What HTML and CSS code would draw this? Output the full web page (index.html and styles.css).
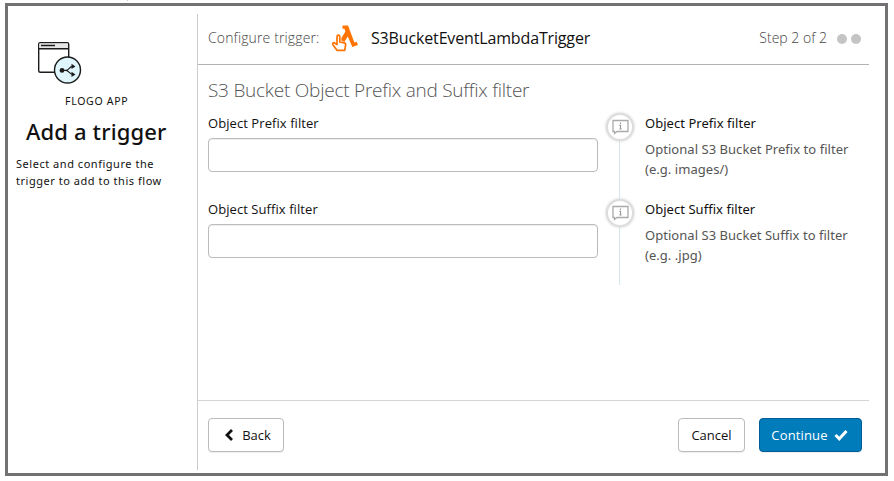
FILE: index.html
```html
<!DOCTYPE html>
<html lang="en">
<head>
<meta charset="utf-8">
<title>Add a trigger</title>
<link rel="stylesheet" href="styles.css">
</head>
<body>
<div class="tick"></div>
<div class="dialog">
  <aside class="sidebar">
    <svg class="app-icon" width="46" height="44" viewBox="0 0 46 44" fill="none" stroke="#1c1c1c" stroke-width="1.4">
      <rect x="1.7" y="1.7" width="30" height="29.5" rx="1.5" fill="#fff"/>
      <path d="M2.4 2.4h28.6v4.8H2.4z" fill="#e6e6e6" stroke="none"/>
      <path d="M2 7.7h30M4 4.5h14"/>
      <circle cx="30.5" cy="29" r="13" fill="#e0f6fd"/>
      <circle cx="25" cy="29.4" r="2.4" fill="#1c1c1c" stroke="none"/>
      <path d="M25 29.4h4c3 0 3-4 7-4M29 29.4c3 0 3 4 7 4" stroke-width="1.1"/>
      <path d="M34.5 22.7l4 2.7-4 2.7zM34.5 30.7l4 2.7-4 2.7z" fill="#1c1c1c" stroke="none"/>
    </svg>
    <div class="app-name">FLOGO APP</div>
    <h1 class="title">Add a trigger</h1>
    <p class="intro">Select and configure the<br>trigger to add to this flow</p>
  </aside>
  <main class="main">
    <header class="header">
      <span class="configure">Configure trigger:</span>
      <svg class="trigger-icon" width="28" height="28" viewBox="0 0 28 28">
        <path d="M11.5 1.5H17L23.4 18.5l2.3-.8 1.2 3.4-5.6 2L16.8 12.4 13.3 18 10.4 16.4V14l4-6.5-1-2.8h-1.9z" fill="#ff7300"/>
        <path d="M6 20.5v-7.8c0-2 2.8-2 2.8 0V18l4.4.9c1.3.3 1.6 1 1.4 2.2l-.9 5.3H6.2L2 20.9c-1.1-1.7.7-2.8 1.9-1.7z" fill="#fff" stroke="#ff7300" stroke-width="1.7" stroke-linejoin="round"/>
      </svg>
      <span class="trigger-name">S3BucketEventLambdaTrigger</span>
      <span class="step">Step 2 of 2</span>
      <i class="dot"></i><i class="dot"></i>
    </header>
    <section class="content">
      <h2 class="heading">S3 Bucket Object Prefix and Suffix filter</h2>
      <div class="columns">
        <div class="fields">
          <div class="field"><label class="label" for="prefix">Object Prefix filter</label><input class="input" id="prefix"></div>
          <div class="field"><label class="label" for="suffix">Object Suffix filter</label><input class="input" id="suffix"></div>
        </div>
        <div class="hints">
          <div class="hint">
            <div class="badge"><svg width="17" height="16" viewBox="0 0 17 16"><path d="M1 1.5h15v11H5L2.5 14.5v-2H1z" fill="none" stroke="#aaa" stroke-width="1.3"/><path d="M8.5 3.5v1.4M7.4 6.4h1.1V10M7.4 10h2.2" fill="none" stroke="#999" stroke-width="1.1"/></svg></div>
            <div><div class="hint-title">Object Prefix filter</div><div class="hint-text">Optional S3 Bucket Prefix to filter<br>(e.g. images/)</div></div>
          </div>
          <div class="hint">
            <div class="badge"><svg width="17" height="16" viewBox="0 0 17 16"><path d="M1 1.5h15v11H5L2.5 14.5v-2H1z" fill="none" stroke="#aaa" stroke-width="1.3"/><path d="M8.5 3.5v1.4M7.4 6.4h1.1V10M7.4 10h2.2" fill="none" stroke="#999" stroke-width="1.1"/></svg></div>
            <div><div class="hint-title">Object Suffix filter</div><div class="hint-text">Optional S3 Bucket Suffix to filter<br>(e.g. .jpg)</div></div>
          </div>
        </div>
      </div>
    </section>
    <footer class="footer">
      <button class="button back"><svg width="10" height="12" viewBox="0 0 10 12"><path d="M8 1L3 6l5 5" fill="none" stroke="#111" stroke-width="2.8"/></svg><span>Back</span></button>
      <button class="button cancel"><span>Cancel</span></button>
      <button class="button continue"><span>Continue</span><svg width="14" height="12" viewBox="0 0 14 12"><path d="M1.5 6l3.8 3.8L12.5 2" fill="none" stroke="#fff" stroke-width="3"/></svg></button>
    </footer>
  </main>
</div>
</body>
</html>
```
FILE: styles.css
```css
* { box-sizing: border-box; }
body { margin: 0; height: 481px; overflow: hidden; background: #fff; color: #111; font-family: "Open Sans", "Noto Sans", sans-serif; font-size: 13px; }
h1, h2, p { margin: 0; font-weight: 400; }
svg { display: block; flex: none; }
span, .heading, .title, .app-name, .intro, .label, .hint { white-space: nowrap; }
.tick { width: 1px; height: 1px; margin-left: 127px; background: #ccc; }
.dialog { display: flex; width: 883px; height: 473px; margin: 2px 0 0 5px; border: 3px solid #737173; }
.sidebar { width: 189px; padding: 35px 0 0 8px; font-family: "Noto Sans", sans-serif; }
.app-icon { margin-left: 21px; }
.app-name { margin: 8px 0 0 49px; font-size: 10.5px; line-height: 16px; letter-spacing: .7px; }
.title { margin: 7px 0 0 10px; font-size: 22px; line-height: 30px; font-weight: 500; letter-spacing: .15px; }
.intro { margin-top: 9px; font-size: 11px; line-height: 17px; letter-spacing: .53px; }
.main { display: flex; flex-direction: column; width: 672px; height: 456px; margin-top: 8px; border-left: 1px solid #ccc; }
.header { display: flex; align-items: center; height: 51px; padding: 0 8px 3px 10px; border-bottom: 1px solid #b3b3b3; }
.configure { width: 123px; font-size: 14px; font-weight: 300; letter-spacing: .13px; color: #444; }
.trigger-icon { margin-right: 12px; }
.trigger-name { font-size: 16px; letter-spacing: -.15px; }
.step { margin: 0 6px 0 auto; font-size: 14px; font-weight: 300; color: #444; }
.dot { width: 10px; height: 10px; margin: 2px 0 0 4px; border-radius: 50%; background: #c4c4c4; }
.content { flex: 1; padding: 11px 0 0 10px; }
.heading { height: 28px; font-size: 19px; line-height: 28px; font-weight: 300; letter-spacing: -.24px; color: #555; }
.columns { display: flex; margin-top: 10px; }
.fields { width: 390px; }
.field { height: 86px; }
.label { display: block; height: 24px; line-height: 18px; letter-spacing: .07px; }
.input { display: block; width: 390px; height: 34px; border: 1px solid #bbb; border-radius: 4px; background: #fff; box-shadow: inset 0 1px 1px #eee; }
.hints { height: 171px; margin-left: 8px; background: linear-gradient(#d5e8ee, #d5e8ee) 13px 10px / 1px 161px no-repeat; font-family: "Noto Sans", sans-serif; letter-spacing: .04px; }
.hint { display: flex; height: 86px; }
.badge { display: grid; place-items: center; width: 28px; height: 28px; margin: -1px 11px 0 0; border: 2px solid #ddd; border-radius: 50%; background: #fff; box-shadow: 0 0 3px #ccc; }
.hint-title { line-height: 18px; }
.hint-text { margin-top: 7px; line-height: 20px; color: #555; }
.footer { display: flex; height: 70px; padding: 17px 7px 0 10px; border-top: 1px solid #d5d5d5; }
.button { display: flex; align-items: center; justify-content: center; height: 34px; padding: 0; border: 1px solid #bbb; border-radius: 4px; background: #fff; color: #111; font: inherit; box-shadow: 0 1px 1px #eee; }
.back { width: 76px; padding-left: 3px; gap: 8px; }
.cancel { width: 67px; margin: 0 14px 0 auto; }
.continue { width: 103px; padding-right: 2px; gap: 6px; letter-spacing: .15px; border-color: #005b99; background: #007cba; color: #fff; }
```
